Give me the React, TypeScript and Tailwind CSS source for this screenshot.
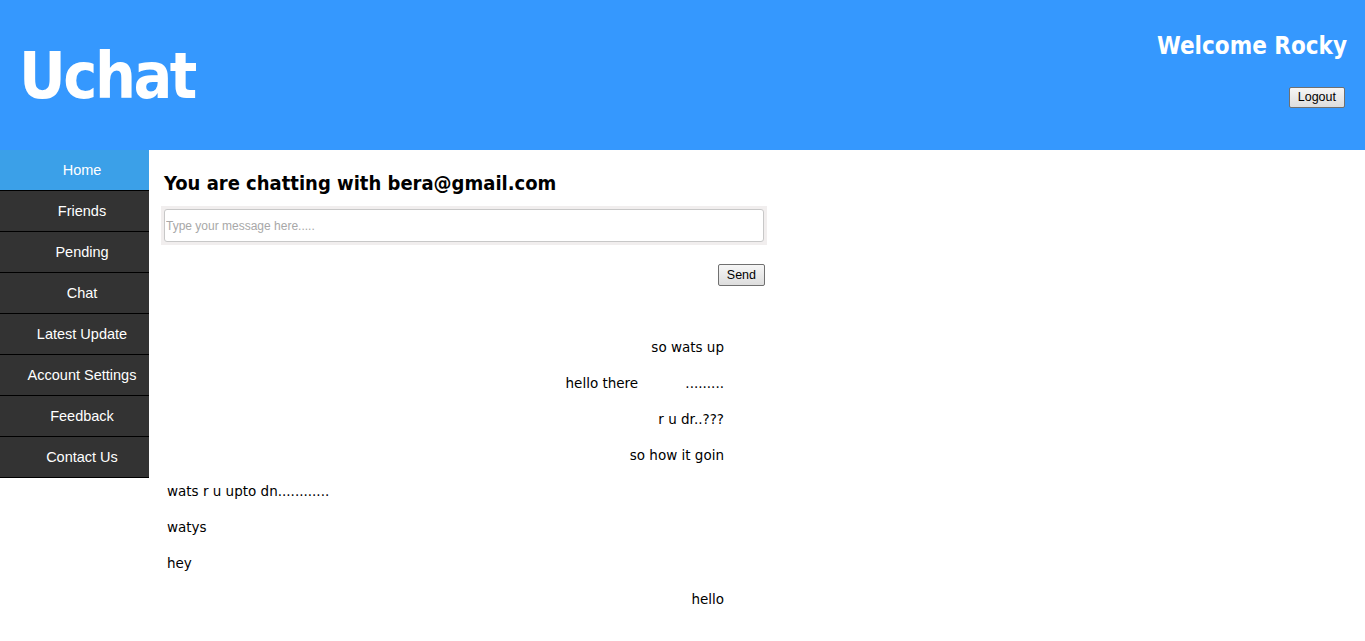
const MENU = [
  "Home",
  "Friends",
  "Pending",
  "Chat",
  "Latest Update",
  "Account Settings",
  "Feedback",
  "Contact Us",
];

const MESSAGES: { text: string; mine: boolean }[] = [
  { text: "so wats up", mine: true },
  { text: "hello there           .........", mine: true },
  { text: "r u dr..???", mine: true },
  { text: "so how it goin", mine: true },
  { text: "wats r u upto dn............", mine: false },
  { text: "watys", mine: false },
  { text: "hey", mine: false },
  { text: "hello", mine: true },
];

export default function App() {
  return (
    <div className="min-h-[641px] bg-white font-['DejaVu_Sans',sans-serif]">
      <header className="h-[150px] bg-[#3598fe] flex justify-between text-white">
        <h1 className="pl-[19px] pt-[38px] text-[64px] font-bold leading-[76px] tracking-[-2.5px] font-['DejaVu_Sans_Condensed','DejaVu_Sans',sans-serif]">
          Uchat
        </h1>
        <div className="flex flex-col items-end pr-[18px] pt-[32px]">
          <div className="text-[24px] font-bold leading-[28px] font-['DejaVu_Sans_Condensed','DejaVu_Sans',sans-serif]">
            Welcome Rocky
          </div>
          <button className="mt-[27px] mr-[2px] h-[21px] px-[8px] text-[12.5px] text-black bg-gradient-to-b from-[#f6f6f6] to-[#dddddd] border border-[#707070] rounded-[2px] font-['Liberation_Sans',sans-serif]">
            Logout
          </button>
        </div>
      </header>

      <div className="flex">
        <nav className="w-[149px] shrink-0 font-['Liberation_Sans',sans-serif]">
          <ul className="flex flex-col">
            {MENU.map((item, i) => (
              <li
                key={item}
                className={`h-[41px] flex items-center justify-center pl-[15px] pt-[2px] text-[14.5px] text-white border-b border-black ${
                  i === 0 ? "bg-[#3ba0e8] border-[#3ba0e8]" : "bg-[#333333]"
                }`}
              >
                {item}
              </li>
            ))}
          </ul>
        </nav>

        <main className="pl-[12px] pt-[20px] w-[620px]">
          <h2 className="pl-[3px] text-[20px] font-bold leading-[26px] text-black font-['DejaVu_Sans_Condensed','DejaVu_Sans',sans-serif]">
            You are chatting with bera@gmail.com
          </h2>
          <div className="mt-[10px] w-[606px] bg-[#f1eeee] p-[3px]">
            <input
              placeholder="Type your message here....."
              className="w-full h-[33px] border border-[#c8c8c8] rounded-[3px] bg-white px-[1px] text-[12px] font-['Liberation_Sans',sans-serif] placeholder:text-[#a8a8a8] outline-none"
            />
          </div>
          <div className="w-[606px] flex justify-end pr-[2px] mt-[19px]">
            <button className="h-[22px] px-[8px] text-[12.5px] text-black bg-gradient-to-b from-[#f6f6f6] to-[#dddddd] border border-[#707070] rounded-[2px] font-['Liberation_Sans',sans-serif]">
              Send
            </button>
          </div>
          <div className="mt-[52px] w-[563px] pl-[6px] flex flex-col gap-[18px]">
            {MESSAGES.map((m, i) => (
              <div
                key={i}
                className={`h-[18px] leading-[18px] text-[13.5px] text-black whitespace-pre ${
                  m.mine ? "text-right" : "text-left"
                }`}
              >
                {m.text}
              </div>
            ))}
          </div>
        </main>
      </div>
    </div>
  );
}
